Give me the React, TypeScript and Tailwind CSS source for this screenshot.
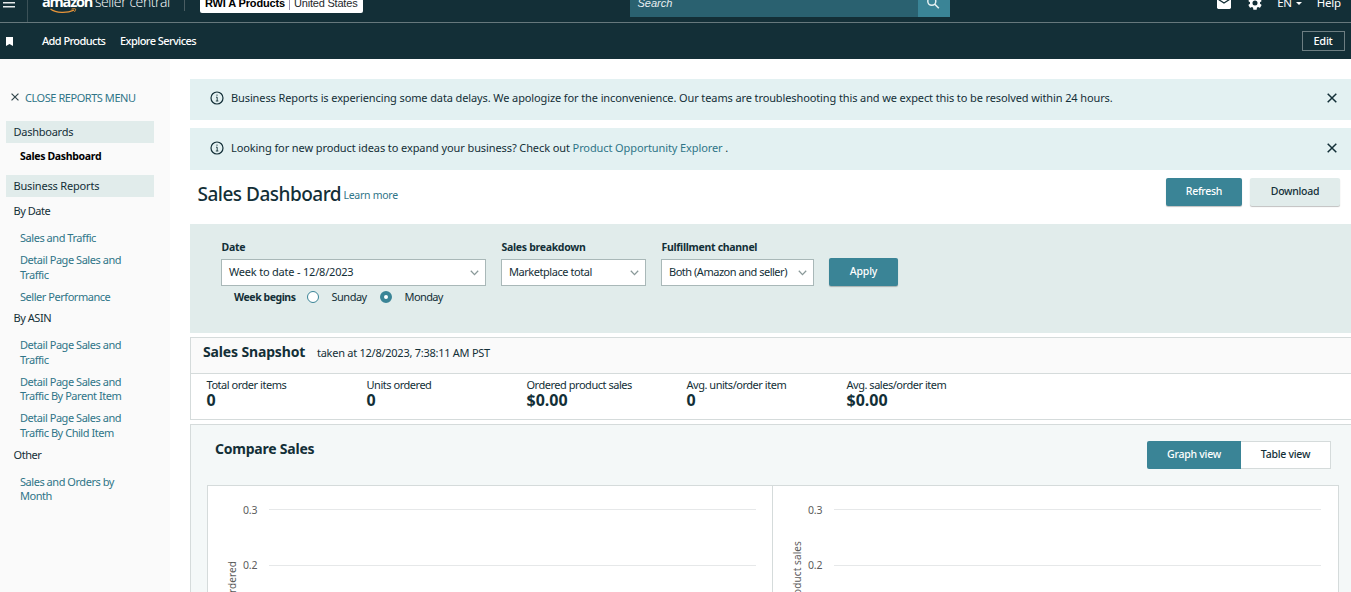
import type { ReactNode } from "react";

const sidebarGroups = [
  {
    title: "By Date",
    links: [["Sales and Traffic"], ["Detail Page Sales and", "Traffic"], ["Seller Performance"]],
  },
  {
    title: "By ASIN",
    links: [
      ["Detail Page Sales and", "Traffic"],
      ["Detail Page Sales and", "Traffic By Parent Item"],
      ["Detail Page Sales and", "Traffic By Child Item"],
    ],
  },
  { title: "Other", links: [["Sales and Orders by", "Month"]] },
];

const metrics = [
  { label: "Total order items", value: "0" },
  { label: "Units ordered", value: "0" },
  { label: "Ordered product sales", value: "$0.00" },
  { label: "Avg. units/order item", value: "0" },
  { label: "Avg. sales/order item", value: "$0.00" },
];

function CloseIcon({ className }: { className: string }) {
  return (
    <svg viewBox="0 0 10 10" fill="none" className={className}>
      <path d="M0.7 0.7L9.3 9.3M9.3 0.7L0.7 9.3" stroke="currentColor" strokeWidth="1.5" />
    </svg>
  );
}

function InfoIcon() {
  return (
    <svg viewBox="0 0 14 14" fill="none" className="h-3.5 w-3.5 shrink-0">
      <circle cx="7" cy="7" r="6" stroke="currentColor" strokeWidth="1.2" />
      <path d="M6 6.2H7.2V10M5.8 10H8.4" stroke="currentColor" strokeWidth="0.9" />
      <circle cx="7" cy="4.1" r="0.7" fill="currentColor" />
    </svg>
  );
}

function Header() {
  return (
    <header className="bg-[#132f37] text-white">
      <div className="flex h-[23px] items-end overflow-hidden border-b border-[#66787c]">
        <div className="flex h-[38px] w-[28px] shrink-0 items-center border-r border-[#3b5157]">
          <svg viewBox="0 0 12 10" className="ml-[2.5px] h-2.5 w-3 fill-[#e6eaeb]">
            <path d="M0 0h12v1.6H0zM0 4h12v1.6H0zM0 8h12v1.6H0z" />
          </svg>
        </div>
        <div className="ml-[14px] flex h-[38px] w-[142px] shrink-0 flex-col pt-[9px]">
          <div className="flex h-[18px] items-baseline whitespace-nowrap leading-[18px]">
            <span className="w-[53px] font-['Open_Sans',sans-serif] text-[14.5px] font-bold tracking-[-1.2px]">amazon</span>
            <span className="font-['Open_Sans',sans-serif] text-[14px] font-light tracking-[-0.42px]">seller central</span>
          </div>
          <svg viewBox="0 0 28 6" fill="none" className="-mt-[3px] ml-[8px] h-1.5 w-7">
            <path d="M0.5 1C6 5.4 17 5.4 24 2.2" stroke="#e8953a" strokeWidth="1.3" />
            <path d="M21.5 1.1C24 0.5 25.4 0.5 25.6 1C25.8 1.7 25.2 2.9 24.4 3.9" stroke="#e8953a" strokeWidth="1" />
          </svg>
        </div>
        <div className="mb-[11px] h-6 w-px bg-[#4a5d62]" />
        <div className="mb-[9px] ml-[15px] flex h-6 w-[163px] shrink-0 items-center whitespace-nowrap rounded-[2px] bg-white pl-[5px] pt-[4px] font-['Liberation_Sans',sans-serif] text-[11px] text-[#24282c]">
          <b className="tracking-[-0.15px] text-black">RWI A Products</b>
          <span className="mx-1 h-3.5 w-px bg-[#9b93b5]" />
          <span className="tracking-[-0.2px]">United States</span>
        </div>
        <div className="mb-[5px] ml-[266.5px] flex h-8 w-[320px] shrink-0">
          <div className="flex flex-1 items-center bg-[#2a6170] pl-2 pt-[5px] font-['Liberation_Sans',sans-serif] text-[11px] italic text-[#e8eff0]">
            Search
          </div>
          <div className="flex w-8 items-center justify-center bg-[#3a8496]">
            <svg viewBox="0 0 14 14" fill="none" className="mt-[4px] -ml-[2px] h-3.5 w-3.5">
              <circle cx="5.8" cy="5.3" r="4" stroke="#e5f0f2" strokeWidth="1.5" />
              <path d="M8.8 8.3L12.8 12.3" stroke="#e5f0f2" strokeWidth="1.6" />
            </svg>
          </div>
        </div>
        <div className="mb-px ml-auto flex h-[36px] shrink-0 items-center pr-[10px] text-[11.5px]">
          <svg viewBox="0 0 14 12" className="h-3 w-3.5">
            <rect width="14" height="12" rx="1.4" fill="#fff" />
            <path d="M1.5 2.5L7 6L12.5 2.5" fill="none" stroke="#132f37" strokeWidth="1.3" />
          </svg>
          <svg viewBox="2 2 20 20" className="ml-[17px] h-3.5 w-3.5 fill-white">
            <path d="M19.14 12.94c.04-.3.06-.61.06-.94 0-.32-.02-.64-.07-.94l2.03-1.58a.49.49 0 0 0 .12-.61l-1.92-3.32a.488.488 0 0 0-.59-.22l-2.39.96c-.5-.38-1.03-.7-1.62-.94l-.36-2.54a.484.484 0 0 0-.48-.41h-3.84c-.24 0-.43.17-.47.41l-.36 2.54c-.59.24-1.13.57-1.62.94l-2.39-.96c-.22-.08-.47 0-.59.22L2.74 8.87c-.12.21-.08.47.12.61l2.03 1.58c-.05.3-.09.63-.09.94s.02.64.07.94l-2.03 1.58a.49.49 0 0 0-.12.61l1.92 3.32c.12.22.37.29.59.22l2.39-.96c.5.38 1.03.7 1.62.94l.36 2.54c.05.24.24.41.48.41h3.84c.24 0 .44-.17.47-.41l.36-2.54c.59-.24 1.13-.56 1.62-.94l2.39.96c.22.08.47 0 .59-.22l1.92-3.32c.12-.22.07-.47-.12-.61zM12 15.6A3.6 3.6 0 1 1 12 8.4a3.6 3.6 0 0 1 0 7.2z" />
          </svg>
          <span className="ml-[15px] tracking-[-0.3px]">EN</span>
          <svg viewBox="0 0 6 3" className="ml-[4px] h-[3px] w-1.5 fill-white">
            <path d="M0 0h6L3 3z" />
          </svg>
          <span className="ml-[15px] tracking-[-0.2px]">Help</span>
        </div>
      </div>
      <div className="flex h-9 items-center text-[11px] font-medium">
        <svg viewBox="0 0 7 9" className="ml-[5.5px] h-[9px] w-[7px] fill-white">
          <path d="M0 0h7v9L3.5 7L0 9z" />
        </svg>
        <span className="ml-[29.5px] w-[78px] tracking-[-0.58px]">Add Products</span>
        <span className="tracking-[-0.56px]">Explore Services</span>
        <button className="ml-auto mr-[6.5px] h-5 w-[43px] border border-[#6d7e82] text-[11px] font-medium leading-[18px] tracking-[-0.3px]">
          Edit
        </button>
      </div>
    </header>
  );
}

function Sidebar() {
  return (
    <aside className="h-[533px] w-[170px] shrink-0 bg-[#fafafa] pl-[6px] pt-[30px]">
      <div className="flex h-[18px] items-center pl-[5px] text-[#2f7588]">
        <CloseIcon className="-mt-[3px] h-2 w-2 text-[#33474d]" />
        <span className="ml-[6px] tracking-[-0.45px]">CLOSE REPORTS MENU</span>
      </div>
      <div className="mt-[14px] h-[22px] w-[148px] bg-[#e1eceb] pl-[7.5px] leading-[22px] tracking-[-0.25px]">Dashboards</div>
      <div className="h-8 pl-[14px] text-[10.5px] leading-[26px] font-bold tracking-[-0.33px] text-black">Sales Dashboard</div>
      <div className="h-[22px] w-[148px] bg-[#e1eceb] pl-[7.5px] leading-[22px] tracking-[-0.18px]">Business Reports</div>
      {sidebarGroups.map((group) => (
        <div key={group.title} className="pl-[7.5px] pt-[7.3px] leading-[14.6px] tracking-[-0.46px]">
          <div className="pb-[5px]">{group.title}</div>
          <ul className="pl-[6.5px] text-[#2f7588]">
            {group.links.map((lines, index) => (
              <li key={index} className="pt-[7.3px]">
                {lines.map((line) => (
                  <span key={line} className="block">{line}</span>
                ))}
              </li>
            ))}
          </ul>
        </div>
      ))}
    </aside>
  );
}

function Alert({ children, className }: { children: ReactNode; className: string }) {
  return (
    <div className={`flex bg-[#e3f1f2] pl-5 pr-[14px] ${className}`}>
      <div className="flex h-[38px] flex-1 items-center">
        <InfoIcon />
        <p className="ml-[7px] flex-1 whitespace-nowrap">{children}</p>
        <CloseIcon className="h-2.5 w-2.5" />
      </div>
    </div>
  );
}

function Select({ label, value, className }: { label: string; value: string; className: string }) {
  return (
    <div className={className}>
      <div className="h-[17px] whitespace-nowrap pl-[0.5px] text-[10.5px] font-bold leading-[14px] tracking-[-0.3px]">{label}</div>
      <div className="mt-[2px] flex h-[27px] items-center border border-[#a9b8b8] bg-white pl-[7px] pr-[6px]">
        <span className="flex-1 whitespace-nowrap">{value}</span>
        <svg viewBox="0 0 9 6" fill="none" className="h-1.5 w-[9px]">
          <path d="M0.8 0.8L4.5 4.6L8.2 0.8" stroke="#8a9999" strokeWidth="1.3" />
        </svg>
      </div>
    </div>
  );
}

function Filters() {
  return (
    <div className="mt-[16px] flex h-[109px] bg-[#e1eceb] pl-[31px] pt-[16px]">
      <div className="w-[265px]">
        <Select label="Date" value="Week to date - 12/8/2023" className="w-[265px] tracking-[-0.2px]" />
        <div className="flex h-[22px] items-center pl-[13px]">
          <b className="w-[73px] pt-px text-[10.5px] tracking-[-0.45px]">Week begins</b>
          <span className="h-3 w-3 rounded-full border border-[#3a8496] bg-white" />
          <span className="ml-[12.5px] w-[48.5px] tracking-[-0.5px]">Sunday</span>
          <span className="h-3 w-3 rounded-full border-4 border-[#3a8496] bg-white" />
          <span className="ml-[12.5px] tracking-[-0.6px]">Monday</span>
        </div>
      </div>
      <Select label="Sales breakdown" value="Marketplace total" className="ml-[15px] w-[145px] tracking-[-0.45px]" />
      <Select label="Fulfillment channel" value="Both (Amazon and seller)" className="ml-[15px] w-[153px] tracking-[-0.48px]" />
      <button className="ml-[15px] mt-[18px] h-7 w-[69px] rounded-[2px] bg-[#3a8496] pb-px text-[10.5px] font-medium tracking-[-0.15px] text-white shadow-[0_1px_1px_rgba(0,0,0,0.25)]">
        Apply
      </button>
    </div>
  );
}

function Snapshot() {
  return (
    <section className="mt-1 border border-r-0 border-[#d5dbdb]">
      <div className="flex h-9 items-baseline border-b border-[#d5dbdb] bg-[#fafafa] pl-3 pt-[3px]">
        <h2 className="w-[114px] whitespace-nowrap text-[14px] font-bold leading-[22px] tracking-[-0.15px]">Sales Snapshot</h2>
        <span className="tracking-[-0.26px]">taken at 12/8/2023, 7:38:11 AM PST</span>
      </div>
      <div className="flex h-[45px] pl-[15.5px] pt-[4px]">
        {metrics.map((metric) => (
          <div key={metric.label} className="w-40 whitespace-nowrap">
            <div className="leading-[14px] tracking-[-0.47px]">{metric.label}</div>
            <div className="text-[16px] font-bold leading-[17px]">{metric.value}</div>
          </div>
        ))}
      </div>
    </section>
  );
}

function Chart({ label, labelEnd }: { label: string; labelEnd: number }) {
  return (
    <svg width="565" height="200" viewBox="0 0 565 200" className="shrink-0 text-[10.5px]">
      <path d="M61 23.5H548M61 79.5H548M61 135.5H548" stroke="#e6e8e9" />
      <g fill="#5c5c5c">
        <text x="35" y="28" className="tracking-[-0.2px]">0.3</text>
        <text x="35" y="82.5" className="tracking-[-0.2px]">0.2</text>
        <text x="35" y="138" className="tracking-[-0.2px]">0.1</text>
        <text transform={`translate(28 ${labelEnd}) rotate(-90)`} textAnchor="end" className="text-[10px] tracking-[0.1px]">
          {label}
        </text>
      </g>
    </svg>
  );
}

function CompareSales() {
  return (
    <section className="mt-1 h-[220px] border border-r-0 border-[#d5dbdb] bg-[#f4f8f8] pl-4">
      <div className="flex h-[60px] items-start justify-between pl-2 pr-[20px] pt-[16px]">
        <h2 className="text-[14px] font-bold leading-4 tracking-[-0.22px]">Compare Sales</h2>
        <div className="flex h-7 text-[10.5px] leading-[26px] tracking-[-0.25px]">
          <button className="w-[94px] rounded-l-[2px] bg-[#3a8496] pb-[2px] font-medium text-white">Graph view</button>
          <button className="w-[90px] border border-l-0 border-[#d5dbdb] bg-white pb-[2px] font-medium leading-[24px]">Table view</button>
        </div>
      </div>
      <div className="flex w-[1132px] border border-[#d5dbdb] bg-white">
        <Chart label="Units ordered" labelEnd={75} />
        <div className="-ml-px border-l border-[#d5dbdb]">
          <Chart label="Ordered product sales" labelEnd={55} />
        </div>
      </div>
    </section>
  );
}

export default function App() {
  return (
    <div className="h-[592px] w-[1351px] overflow-hidden bg-white font-['Noto_Sans',sans-serif] text-[11px] text-[#132f37]">
      <Header />
      <div className="flex">
        <Sidebar />
        <main className="ml-5 min-w-0 flex-1 pt-5">
          <Alert className="h-[41px] tracking-[-0.113px]">
            Business Reports is experiencing some data delays. We apologize for the inconvenience. Our teams are
            troubleshooting this and we expect this to be resolved within 24 hours.
          </Alert>
          <Alert className="mt-2 h-[42px] pt-[1px] tracking-[-0.1px]">
            Looking for new product ideas to expand your business? Check out{" "}
            <a className="text-[#2f7588]">Product Opportunity Explorer</a> .
          </Alert>
          <div className="flex h-[38px] items-start pl-[7.5px] pr-[11px] pt-2">
            <h1 className="w-[146px] whitespace-nowrap text-[19px] font-medium leading-[32px] tracking-[-0.5px]">Sales Dashboard</h1>
            <a className="flex-1 text-[10.5px] leading-[35px] tracking-[-0.28px] text-[#2f7588]">Learn more</a>
            <button className="h-7 w-[76px] rounded-[2px] bg-[#3a8496] pb-px text-[10.5px] font-medium tracking-[-0.3px] text-white shadow-[0_1px_1px_rgba(0,0,0,0.25)]">
              Refresh
            </button>
            <button className="ml-2 h-7 w-[90px] rounded-[2px] bg-[#e1eceb] pb-px text-[10.5px] font-medium tracking-[-0.3px] shadow-[0_1px_1px_rgba(0,0,0,0.25)]">
              Download
            </button>
          </div>
          <Filters />
          <Snapshot />
          <CompareSales />
        </main>
      </div>
    </div>
  );
}
